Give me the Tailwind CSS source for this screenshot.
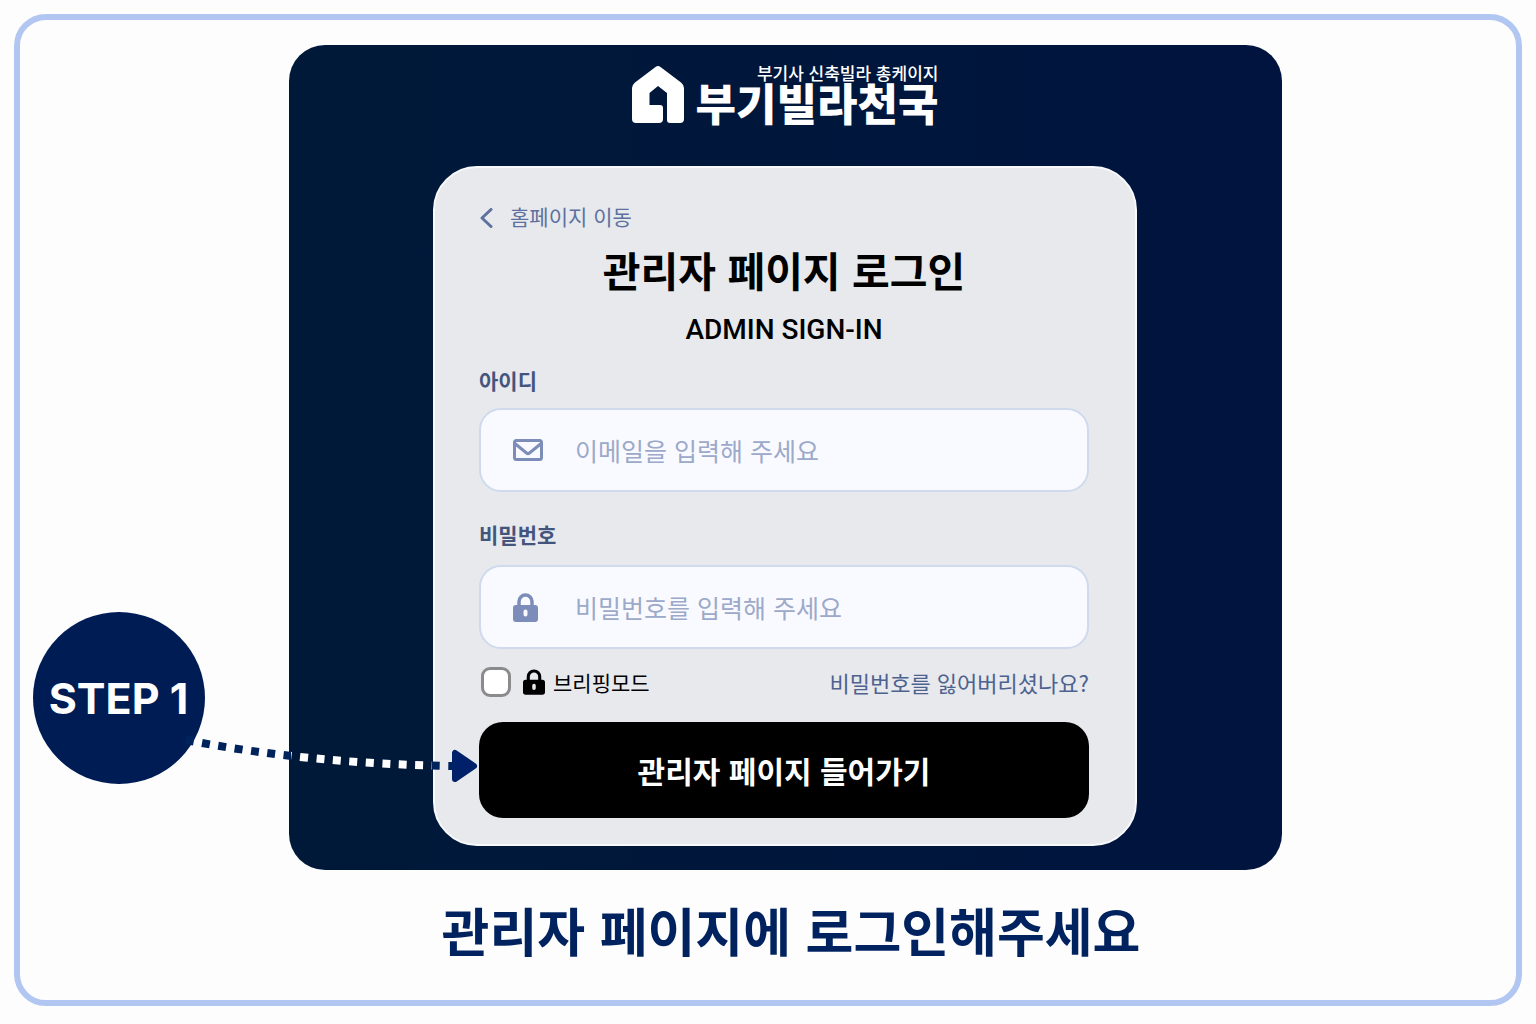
<!DOCTYPE html>
<html lang="ko">
<head>
    <meta charset="UTF-8">
    <meta name="viewport" content="width=device-width, initial-scale=1.0">
    <title>관리자 페이지 로그인</title>
    <script src="https://cdn.jsdelivr.net/npm/@tailwindcss/browser@4"></script>
</head>
<body class="min-h-screen flex flex-col bg-[#fdfdfd] px-[14px] pt-[14px] pb-[18px] font-['Noto_Sans_CJK_KR',sans-serif]">
    <main class="flex-1 flex flex-col items-center border-6 border-[#b1c6f0] rounded-[32px] pt-[25px] pb-8 pl-[34px]">
        <!-- Login panel -->
        <section class="relative w-full max-w-[993px] bg-linear-to-r from-[#001938] to-[#00143f] rounded-[36px] pt-5 pb-6 flex flex-col items-center">
            <!-- Logo -->
            <div class="flex items-center gap-3 text-white mb-[43px]">
                <svg class="w-[52px] h-[58px]" viewBox="0 0 52 58" fill="currentColor">
                    <path d="M23.500 2Q26 0 28.500 2L49 17.500Q52 20 52 23V54Q52 58 48 58H38Q35 58 35 55V28L26 21L17.500 28V40H28Q31 40 31 43V54Q31 58 27 58H4Q0 58 0 54V23Q0 20 3 17.500Z"/>
                </svg>
                <div class="flex flex-col items-end">
                    <span class="text-[17px] leading-[16px] font-medium">부기사 신축빌라 총케이지</span>
                    <span class="text-[44px] leading-[42px] font-black">부기빌라천국</span>
                </div>
            </div>

            <!-- Card -->
            <div class="w-full max-w-[704px] bg-[#e7e9ed] border-2 border-[#f8f9fc] rounded-[44px] pl-11 pr-[46px] pt-8 pb-[26px]">
                <a href="#" class="inline-flex items-center gap-[17px] text-[21px] leading-8 text-[#5d719f]">
                    <svg class="w-[14px] h-5 mt-1" viewBox="0 0 14 20" fill="none" stroke="currentColor" stroke-width="3" stroke-linecap="round" stroke-linejoin="round"><path d="M12 1.500L3 10L12 18.500"/></svg>
                    홈페이지 이동
                </a>
                <h1 class="text-[41px] leading-[60px] font-bold text-black text-center mt-1.5">관리자 페이지 로그인</h1>
                <p class="text-[28px] leading-10 font-medium text-black text-center mt-[11px] font-['Roboto',sans-serif]">ADMIN SIGN-IN</p>

                <form class="flex flex-col mt-3.5">
                    <label for="userId" class="text-[21px] leading-8 font-bold text-[#44557d]">아이디</label>
                    <div class="flex items-center h-[84px] mt-3 bg-[#f9faff] border-2 border-[#cfdaed] rounded-[22px] pl-8">
                        <svg class="w-[30px] h-[22px] text-[#7b8db8]" viewBox="0 0 30 22" fill="none" stroke="currentColor" stroke-width="3" stroke-linejoin="round" stroke-linecap="round"><rect x="1.500" y="1.500" width="27" height="19" rx="2"/><path d="M2.500 5L13.500 14Q15 15.200 16.500 14L27.500 5"/></svg>
                        <input id="userId" type="email" placeholder="이메일을 입력해 주세요" class="flex-1 min-w-0 h-full ml-8 pr-6 bg-transparent outline-none text-[25px] text-[#44557d] placeholder:text-[#9ca9c9]">
                    </div>
                    <label for="userPw" class="text-[21px] leading-8 font-bold text-[#44557d] mt-[26px]">비밀번호</label>
                    <div class="flex items-center h-[84px] mt-[15px] bg-[#f9faff] border-2 border-[#cfdaed] rounded-[22px] pl-8">
                        <svg class="w-[25px] h-[29px] mr-[5px] text-[#7b8db8]" viewBox="0 0 25 29" fill="none"><path d="M6 14V8.500a6.500 6.500 0 0 1 13 0V14" stroke="currentColor" stroke-width="3.500"/><path fill="currentColor" fill-rule="evenodd" d="M3 12H22a3 3 0 0 1 3 3V26a3 3 0 0 1-3 3H3a3 3 0 0 1-3-3V15a3 3 0 0 1 3-3ZM12.500 16.500a2 2 0 0 0-2 2V21.500a2 2 0 0 0 4 0V18.500a2 2 0 0 0-2-2Z"/></svg>
                        <input id="userPw" type="password" placeholder="비밀번호를 입력해 주세요" class="flex-1 min-w-0 h-full ml-8 pr-6 bg-transparent outline-none text-[25px] text-[#44557d] placeholder:text-[#9ca9c9]">
                    </div>

                    <div class="flex items-center justify-between mt-[15px] text-[21px] leading-9">
                        <label for="briefing" class="flex items-center text-black">
                            <input id="briefing" type="checkbox" class="appearance-none w-[30px] h-[30px] ml-0.5 bg-white border-3 border-[#8b8b8d] rounded-[9px] checked:bg-black">
                            <svg class="w-[22px] h-[26px] ml-3 mr-2" viewBox="0 0 25 29" fill="none"><path d="M6 14V8.500a6.500 6.500 0 0 1 13 0V14" stroke="currentColor" stroke-width="3.500"/><path fill="currentColor" fill-rule="evenodd" d="M3 12H22a3 3 0 0 1 3 3V26a3 3 0 0 1-3 3H3a3 3 0 0 1-3-3V15a3 3 0 0 1 3-3ZM12.500 16.500a2 2 0 0 0-2 2V21.500a2 2 0 0 0 4 0V18.500a2 2 0 0 0-2-2Z"/></svg>
                            브리핑모드
                        </label>
                        <a href="#" class="text-[22px] text-[#4d628f]">비밀번호를 잃어버리셨나요?</a>
                    </div>

                    <button type="submit" class="h-24 mt-[22px] bg-black text-white text-[30px] font-bold rounded-[24px]">관리자 페이지 들어가기</button>
                </form>
            </div>

            <!-- Step marker and dotted arrow -->
            <div class="absolute top-[567px] -left-[256px] w-[172px] h-[172px] rounded-full bg-[#001c55] flex items-center justify-center text-white text-[43px] font-bold font-['Inter',sans-serif]">STEP 1</div>
            <svg class="absolute top-[675px] -left-[109px] w-[300px] h-[80px] pointer-events-none" viewBox="180 720 300 80" fill="none">
                <defs>
                    <linearGradient id="dots" gradientUnits="userSpaceOnUse" x1="180" y1="0" x2="480" y2="0">
                        <stop offset="0.3700" stop-color="#00235c"/>
                        <stop offset="0.3700" stop-color="#ffffff"/>
                        <stop offset="0.8400" stop-color="#ffffff"/>
                        <stop offset="0.8400" stop-color="#00235c"/>
                    </linearGradient>
                </defs>
                <path d="M186 740Q310 764 456 766" stroke="url(#dots)" stroke-width="8" stroke-dasharray="8 8.500"/>
                <path d="M455 753V779L474 766Z" fill="#00206a" stroke="#00206a" stroke-width="6" stroke-linejoin="round"/>
            </svg>
        </section>

        <!-- Caption -->
        <h2 class="mt-6 pl-3 text-[52px] leading-[72px] font-bold text-[#00225e]">관리자 페이지에 로그인해주세요</h2>
    </main>
</body>
</html>
